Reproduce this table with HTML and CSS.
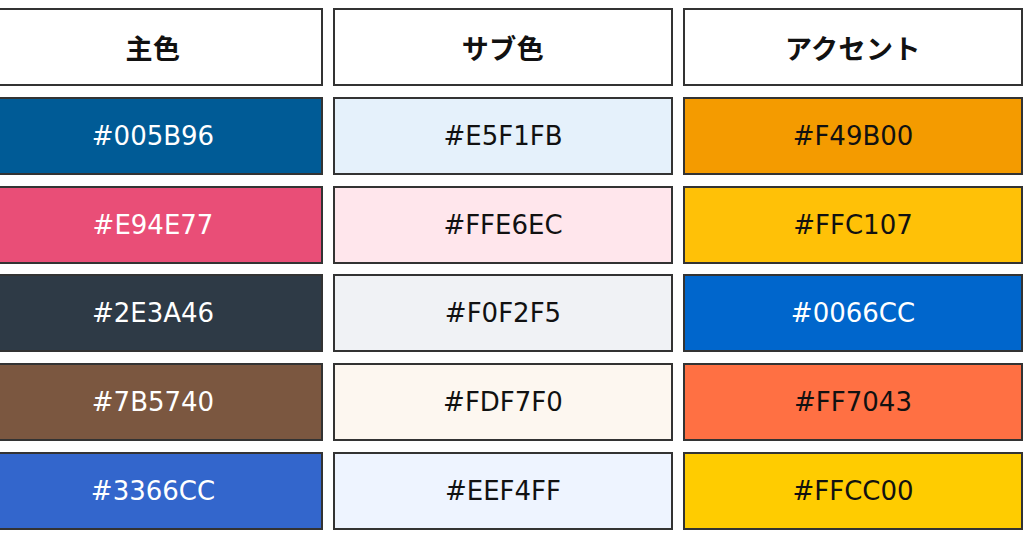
FILE: index.html
```html
<!DOCTYPE html>
<html lang="ja">
<head>
<meta charset="utf-8">
<link rel="stylesheet" href="styles.css">
</head>
<body>
<div class="palette">
  <div class="cell head">主色</div>
  <div class="cell head">サブ色</div>
  <div class="cell head">アクセント</div>

  <div class="cell light-text" style="background:#005B96">#005B96</div>
  <div class="cell" style="background:#E5F1FB">#E5F1FB</div>
  <div class="cell" style="background:#F49B00">#F49B00</div>

  <div class="cell light-text" style="background:#E94E77">#E94E77</div>
  <div class="cell" style="background:#FFE6EC">#FFE6EC</div>
  <div class="cell" style="background:#FFC107">#FFC107</div>

  <div class="cell light-text" style="background:#2E3A46">#2E3A46</div>
  <div class="cell" style="background:#F0F2F5">#F0F2F5</div>
  <div class="cell light-text" style="background:#0066CC">#0066CC</div>

  <div class="cell light-text" style="background:#7B5740">#7B5740</div>
  <div class="cell" style="background:#FDF7F0">#FDF7F0</div>
  <div class="cell" style="background:#FF7043">#FF7043</div>

  <div class="cell light-text" style="background:#3366CC">#3366CC</div>
  <div class="cell" style="background:#EEF4FF">#EEF4FF</div>
  <div class="cell" style="background:#FFCC00">#FFCC00</div>
</div>
</body>
</html>
```
FILE: styles.css
```css
html, body {
  margin: 0;
  padding: 0;
  background: #ffffff;
  overflow: hidden;
  width: 1024px;
  height: 538px;
}
.palette {
  display: grid;
  grid-template-columns: 340px 340px 340px;
  grid-auto-rows: 78px;
  column-gap: 10px;
  row-gap: 10.7px;
  margin-left: -17px;
  padding-top: 8.3px;
  font-family: "DejaVu Sans", "Noto Sans CJK JP", sans-serif;
}
.cell {
  box-sizing: border-box;
  border: 2px solid #333333;
  display: flex;
  align-items: center;
  justify-content: center;
  font-size: 26px;
  color: #111111;
}
.head {
  background: #ffffff;
  font-family: "Noto Sans CJK JP", sans-serif;
  font-weight: 700;
  font-size: 27px;
  letter-spacing: 0.5px;
}
.light-text {
  color: #ffffff;
}
```
